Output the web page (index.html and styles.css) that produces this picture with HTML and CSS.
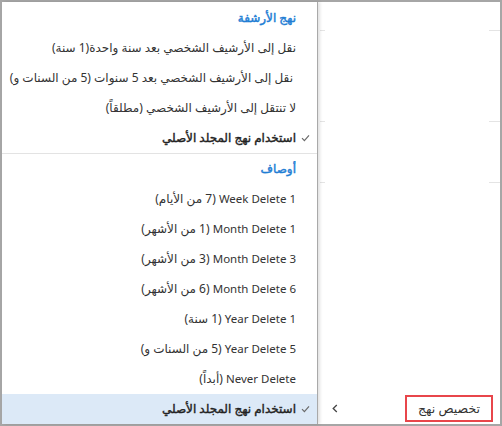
FILE: index.html
```html
<!DOCTYPE html>
<html lang="ar">
<head>
<meta charset="utf-8">
<link rel="stylesheet" href="styles.css">
</head>
<body>
<div class="frame">
  <div class="menu" dir="rtl">
    <div class="section first">
      <div class="row head"><span class="mark"></span><span class="label">نهج الأرشفة</span></div>
      <div class="row"><span class="mark"></span><span class="label">نقل إلى الأرشيف الشخصي بعد سنة واحدة(1 سنة)</span></div>
      <div class="row"><span class="mark"></span><span class="label shift">نقل إلى الأرشيف الشخصي بعد 5 سنوات (5 من السنات و)</span></div>
      <div class="row"><span class="mark"></span><span class="label">لا تنتقل إلى الأرشيف الشخصي (مطلقاً)</span></div>
      <div class="row strong"><span class="mark"><svg width="9" height="8" viewBox="0 0 9 8"><polyline points="1,4.2 3.4,6.6 8,1.4" fill="none" stroke="#6a6a6a" stroke-width="1.2"/></svg></span><span class="label">استخدام نهج المجلد الأصلي</span></div>
    </div>
    <div class="section">
      <div class="row head"><span class="mark"></span><span class="label">أوصاف</span></div>
      <div class="row"><span class="mark"></span><span class="label"><span class="lat">1 Week Delete</span> (7 من الأيام)</span></div>
      <div class="row"><span class="mark"></span><span class="label"><span class="lat">1 Month Delete</span> (1 من الأشهر)</span></div>
      <div class="row"><span class="mark"></span><span class="label"><span class="lat">3 Month Delete</span> (3 من الأشهر)</span></div>
      <div class="row"><span class="mark"></span><span class="label"><span class="lat">6 Month Delete</span> (6 من الأشهر)</span></div>
      <div class="row"><span class="mark"></span><span class="label"><span class="lat">1 Year Delete</span> (1 سنة)</span></div>
      <div class="row"><span class="mark"></span><span class="label"><span class="lat">5 Year Delete</span> (5 من السنات و)</span></div>
      <div class="row"><span class="mark"></span><span class="label"><span class="lat">Never Delete</span> (أبداً)</span></div>
      <div class="row strong selected"><span class="mark"><svg width="9" height="8" viewBox="0 0 9 8"><polyline points="1,4.2 3.4,6.6 8,1.4" fill="none" stroke="#6a6a6a" stroke-width="1.2"/></svg></span><span class="label">استخدام نهج المجلد الأصلي</span></div>
    </div>
  </div>
  <div class="side">
    <div class="sep s1"><span class="seg-l"></span><span class="seg-r"></span></div>
    <div class="sep s2"><span class="seg-l"></span><span class="seg-r"></span></div>
    <div class="sep s3"><span class="seg-l"></span><span class="seg-r"></span></div>
    <div class="footer">
      <svg class="chev" width="6" height="9" viewBox="0 0 6 9"><polyline points="4.8,1 1.2,4.5 4.8,8" fill="none" stroke="#444" stroke-width="1.3"/></svg>
      <div class="btn" dir="rtl">تخصيص نهج</div>
    </div>
  </div>
</div>
</body>
</html>
```
FILE: styles.css
```css
html, body {
  margin: 0;
  padding: 0;
  background: #fff;
}
body {
  font-family: "Noto Sans", "DejaVu Sans", sans-serif;
  font-size: 12px;
  color: #333;
}
.frame {
  width: 502px;
  height: 426px;
  box-sizing: border-box;
  border: 2px solid #a6a6a6;
  display: flex;
  direction: ltr;
  background: #fff;
}
.menu {
  width: 316px;
  flex: none;
  box-sizing: border-box;
  border-right: 1px solid #a9a9a9;
  padding-top: 1px;
  position: relative;
  z-index: 1;
  background: #fff;
  box-shadow: 2px 0 3px rgba(0, 0, 0, 0.12);
}
.section.first {
  border-bottom: 1px solid #e3e3e3;
}
.row {
  display: flex;
  height: 30px;
  line-height: 30px;
  white-space: nowrap;
}
.mark {
  width: 21px;
  flex: none;
  display: flex;
  align-items: center;
  justify-content: center;
  padding-right: 3px;
  box-sizing: border-box;
}
.mark svg {
  display: block;
}
.label {
  flex: 1;
  overflow: hidden;
  text-align: right;
}
.label.shift {
  padding-right: 3px;
}
.lat {
  font-size: 11.5px;
}
.head .label {
  color: #1f7ed4;
  -webkit-text-stroke: 0.45px #1f7ed4;
}
.strong .label {
  color: #222;
  -webkit-text-stroke: 0.4px #222;
}
.selected {
  background: #dce9f7;
}
.side {
  flex: 1;
  display: flex;
  flex-direction: column;
}
.sep {
  display: flex;
  justify-content: space-between;
  padding-left: 2px;
  height: 1px;
}
.s1 { margin-top: 28px; }
.s2 { margin-top: 90px; }
.s3 { margin-top: 60px; }
.seg-l {
  width: 5px;
  height: 1px;
  background: #e4e4e4;
}
.seg-r {
  width: 11px;
  height: 1px;
  background: #e4e4e4;
}
.footer {
  margin-top: auto;
  margin-bottom: 2px;
  height: 27px;
  display: flex;
  align-items: center;
  padding-left: 14px;
}
.chev {
  display: block;
}
.btn {
  margin-left: auto;
  margin-right: 7px;
  width: 88px;
  height: 27px;
  box-sizing: border-box;
  border: 2px solid #e8464b;
  text-align: center;
  line-height: 23px;
  font-size: 12.5px;
  color: #333;
}
```
